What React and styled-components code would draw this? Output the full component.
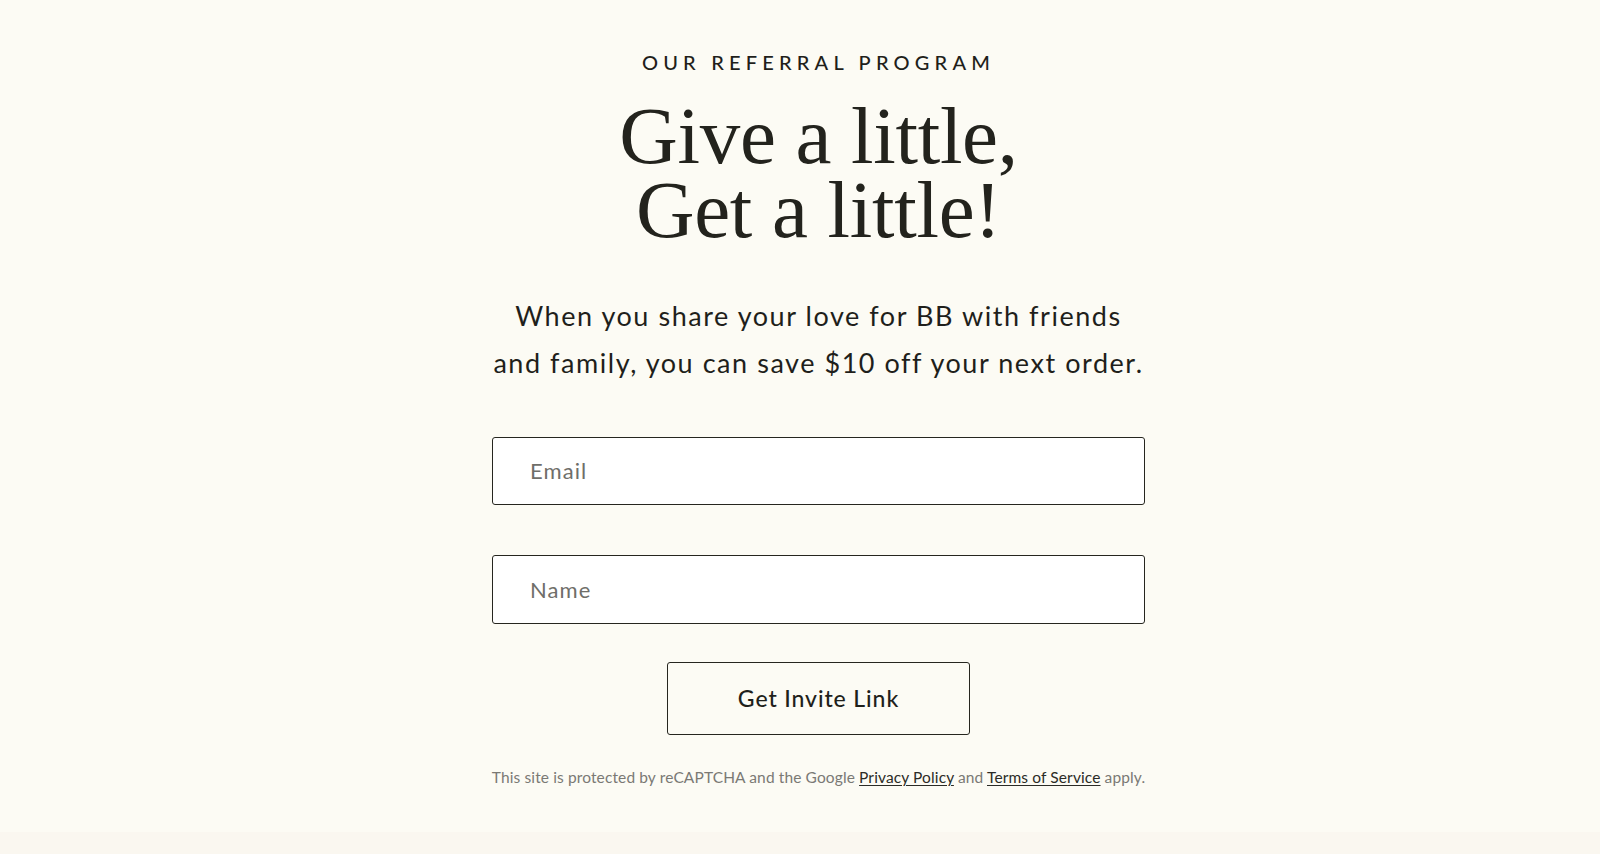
import React from 'react';
import styled, { createGlobalStyle } from 'styled-components';

const GlobalStyle = createGlobalStyle`
  * {
    box-sizing: border-box;
  }

  body {
    margin: 0;
    background: #fcfbf4;
    font-family: Lato, 'Noto Sans', sans-serif;
    color: #1f1f1b;
  }
`;

const Page = styled.main`
  display: flex;
  justify-content: center;
  min-height: 832px;
  padding: 50px 0 0 37px;
`;

const Referral = styled.section`
  display: flex;
  flex-direction: column;
  align-items: center;
  width: 653px;
  text-align: center;
`;

const Eyebrow = styled.p`
  margin: 0;
  font-size: 20px;
  line-height: 24px;
  font-weight: 500;
  letter-spacing: 5.2px;
  text-transform: uppercase;
`;

const Headline = styled.h1`
  margin: 25px 0 0;
  font-family: 'Liberation Serif', 'DejaVu Serif', serif;
  font-size: 81px;
  line-height: 74px;
  font-weight: 400;
  letter-spacing: -0.3px;
  color: #23231d;
`;

const Intro = styled.p`
  margin: 45px 0 0;
  font-size: 27px;
  line-height: 47.3px;
  letter-spacing: 1.55px;
  color: #1f1f1b;
`;

const Form = styled.form`
  display: flex;
  flex-direction: column;
  align-items: center;
  width: 100%;
  margin-top: 50px;
`;

const Field = styled.input`
  width: 100%;
  height: ${(p) => p.$height || 68}px;
  margin-bottom: ${(p) => p.$gap || 0}px;
  padding: 0 37px;
  border: 1.5px solid #26261f;
  border-radius: 3px;
  background: #fff;
  font-family: Lato, 'Noto Sans', sans-serif;
  font-size: 22px;
  letter-spacing: 1.1px;
  color: #1f1f1b;
  outline: none;

  &::placeholder {
    color: #6f6e69;
  }
`;

const SubmitButton = styled.button`
  width: 303px;
  height: 73px;
  border: 1.5px solid #26261f;
  border-radius: 3px;
  background: transparent;
  font-family: Lato, 'Noto Sans', sans-serif;
  font-size: 23px;
  font-weight: 500;
  letter-spacing: 0.9px;
  color: #1f1f1b;
  cursor: pointer;
`;

const Legal = styled.p`
  margin: 32px 0 0;
  font-size: 15.5px;
  line-height: 20px;
  letter-spacing: 0.12px;
  white-space: nowrap;
  color: #7a7974;

  a {
    color: #2b2b26;
    text-decoration: underline;
    text-underline-offset: 2px;
  }
`;

const BottomBand = styled.div`
  height: 22px;
  background: #faf7f0;
`;

export default function App() {
  return (
    <>
      <GlobalStyle />
      <Page>
        <Referral>
          <Eyebrow>Our Referral Program</Eyebrow>
          <Headline>
            Give a little,
            <br />
            Get a little!
          </Headline>
          <Intro>
            When you share your love for BB with friends
            <br />
            and family, you can save $10 off your next order.
          </Intro>
          <Form onSubmit={(e) => e.preventDefault()}>
            <Field type="email" placeholder="Email" $gap={50} />
            <Field type="text" placeholder="Name" $height={69} $gap={38} />
            <SubmitButton type="submit">Get Invite Link</SubmitButton>
          </Form>
          <Legal>
            This site is protected by reCAPTCHA and the Google{' '}
            <a href="#privacy">Privacy Policy</a> and{' '}
            <a href="#terms">Terms of Service</a> apply.
          </Legal>
        </Referral>
      </Page>
      <BottomBand />
    </>
  );
}
